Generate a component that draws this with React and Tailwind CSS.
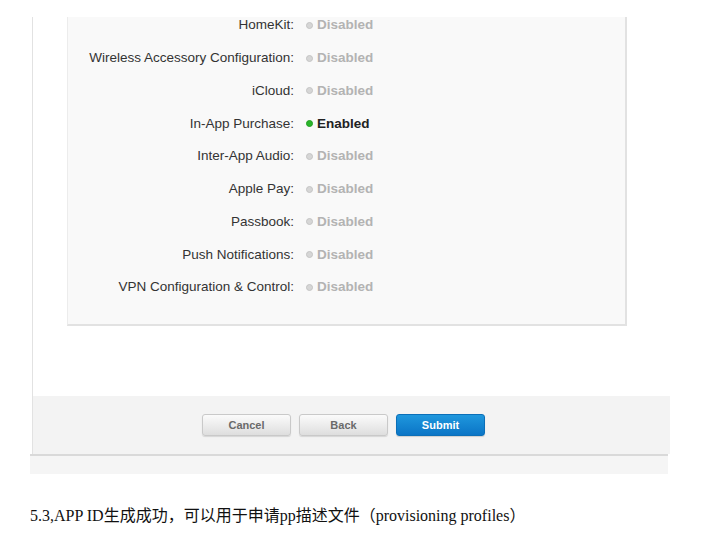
const rows = [
  { label: "HomeKit", on: false },
  { label: "Wireless Accessory Configuration", on: false },
  { label: "iCloud", on: false },
  { label: "In-App Purchase", on: true },
  { label: "Inter-App Audio", on: false },
  { label: "Apple Pay", on: false },
  { label: "Passbook", on: false },
  { label: "Push Notifications", on: false },
  { label: "VPN Configuration & Control", on: false },
];

function Status({ on }) {
  return (
    <div className="flex items-center gap-[4px]">
      {on ? (
        <span className="w-[7px] h-[7px] rounded-full bg-[#2bb52b] border border-[#22a022]" />
      ) : (
        <span className="w-[7px] h-[7px] rounded-full bg-[#d6d6d6] border border-[#c4c4c4]" />
      )}
      <span className={on ? "font-bold text-[#222]" : "font-bold text-[#b3b3b3]"}>
        {on ? "Enabled" : "Disabled"}
      </span>
    </div>
  );
}

function Button({ children, primary }) {
  return (
    <button
      className={
        primary
          ? "w-[89px] h-[22px] rounded-[3px] border border-[#0b6fb8] bg-gradient-to-b from-[#1f97dd] to-[#0b75c6] text-white text-[11px] font-bold shadow-[0_1px_1px_rgba(0,0,0,0.15)]"
          : "w-[89px] h-[22px] rounded-[3px] border border-[#c9c9c9] bg-gradient-to-b from-[#fbfbfb] to-[#dedede] text-[#6a6a6a] text-[11px] font-bold shadow-[0_1px_1px_rgba(0,0,0,0.12)]"
      }
    >
      {children}
    </button>
  );
}

export default function App() {
  return (
    <div className="w-[714px] h-[555px] bg-white overflow-hidden font-['Liberation_Sans',Arial,sans-serif]">
      <div className="pt-[17px] pl-[32px] w-[670px]">
        <div className="border-l border-[#e2e2e2]">
          <div className="pl-[34px] pr-[43px] pb-[70px]">
            <div className="bg-[#f9f9f9] border-l border-[#ececec] border-r-2 border-b-2 border-r-[#e2e2e2] border-b-[#e2e2e2] overflow-hidden">
              <div className="-mt-[8px] pb-[20px] text-[13.5px]">
                {rows.map((r) => (
                  <div key={r.label} className="h-[32.75px] flex items-center">
                    <div className="w-[226px] text-right text-[#333]">{r.label}:</div>
                    <div className="pl-[12px]">
                      <Status on={r.on} />
                    </div>
                  </div>
                ))}
              </div>
            </div>
          </div>
          <div className="h-[58px] bg-[#f3f3f3] flex items-center justify-center gap-[8px] pr-[16px]">
            <Button>Cancel</Button>
            <Button>Back</Button>
            <Button primary>Submit</Button>
          </div>
        </div>
        <div className="-ml-[2px] w-[638px] h-[2px] bg-[#d9d9d9]" />
        <div className="-ml-[2px] w-[638px] h-[18px] bg-[#f5f5f5]" />
      </div>
      <p className="mt-[30px] pl-[30px] text-[16px] text-[#111] font-['Liberation_Serif','Noto_Sans_CJK_SC',serif]">
        5.3,APP ID生成成功，可以用于申请pp描述文件（provisioning profiles）
      </p>
    </div>
  );
}
